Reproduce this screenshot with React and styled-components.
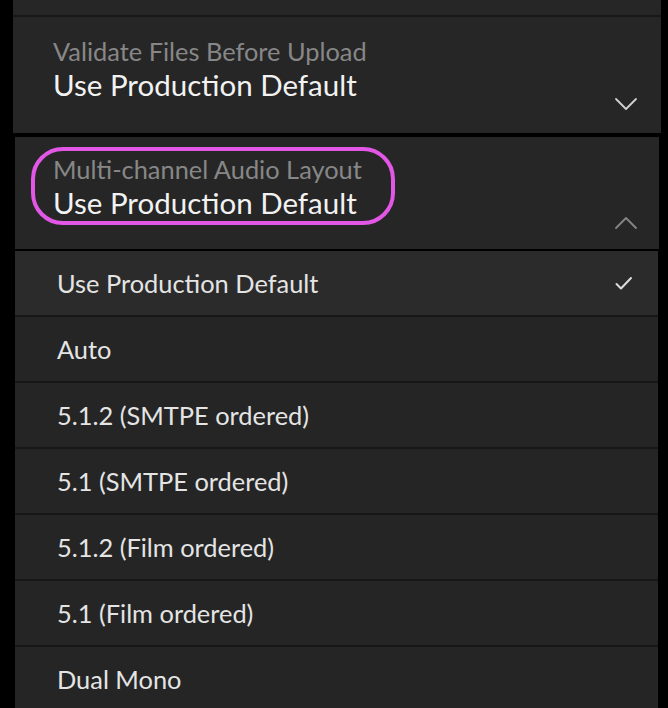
import React from "react";
import styled, { createGlobalStyle } from "styled-components";

const GlobalStyle = createGlobalStyle`
  html, body {
    margin: 0;
    padding: 0;
    background: #000;
  }
  body {
    font-family: "Lato", "Noto Sans", sans-serif;
    -webkit-font-smoothing: antialiased;
  }
`;

const Screen = styled.div`
  width: 668px;
  height: 708px;
  overflow: hidden;
  background: #000;
  display: flex;
  flex-direction: column;
`;

const TopStub = styled.div`
  height: 15px;
  margin: 0 7px 0 13px;
  background: #262626;
  border-bottom: 2px solid #181818;
  flex-shrink: 0;
`;

const Field = styled.div`
  flex-shrink: 0;
  height: ${(p) => p.$height}px;
  margin: ${(p) => p.$margin};
  padding: ${(p) => p.$padding};
  box-sizing: border-box;
  background: #262626;
  display: flex;
  align-items: flex-end;
  justify-content: space-between;
`;

const FieldText = styled.div`
  display: flex;
  flex-direction: column;
  align-self: flex-start;
`;

const Label = styled.div`
  font-size: 25.4px;
  line-height: 30px;
  color: #878787;
  white-space: nowrap;
`;

const Value = styled.div`
  margin-top: 2px;
  font-size: 29.5px;
  line-height: 34px;
  color: #f2f2f2;
  white-space: nowrap;
`;

const Highlight = styled.div`
  margin: -7px 0 0 -22px;
  padding: 3px 29px 1px 18px;
  border: 4px solid #e257e6;
  border-radius: 32px;
`;

const Chevron = styled.svg`
  width: 24px;
  height: 14px;
  margin-bottom: ${(p) => p.$bottom}px;
  flex-shrink: 0;
`;

const Options = styled.div`
  margin: 2px 10px 0 15px;
  display: flex;
  flex-direction: column;
  background: #171717;
`;

const Option = styled.div`
  height: 64px;
  flex-shrink: 0;
  margin-bottom: 2px;
  padding: 0 25px 0 42px;
  background: ${(p) => (p.$selected ? "#2b2b2b" : "#252525")};
  display: flex;
  align-items: center;
  justify-content: space-between;
  font-size: 25.4px;
  color: #e4e4e4;
  white-space: nowrap;
`;

const CheckIcon = () => (
  <svg width="18" height="15" viewBox="0 0 18 15">
    <path
      d="M1.5 8 L6 12.5 L16 2"
      fill="none"
      stroke="#dcdcdc"
      strokeWidth="2"
      strokeLinecap="round"
      strokeLinejoin="round"
    />
  </svg>
);

const options = [
  "Use Production Default",
  "Auto",
  "5.1.2 (SMTPE ordered)",
  "5.1 (SMTPE ordered)",
  "5.1.2 (Film ordered)",
  "5.1 (Film ordered)",
  "Dual Mono",
];

export default function App() {
  return (
    <>
      <GlobalStyle />
      <Screen>
        <TopStub />
        <Field $height={116} $margin="0 7px 0 13px" $padding="19px 23px 0 40px">
          <FieldText>
            <Label>Validate Files Before Upload</Label>
            <Value>Use Production Default</Value>
          </FieldText>
          <Chevron viewBox="0 0 24 14" $bottom={22}>
            <path d="M2 2 L12 12 L22 2" fill="none" stroke="#d0d0d0" strokeWidth="1.8" strokeLinecap="round" strokeLinejoin="round" />
          </Chevron>
        </Field>
        <Field $height={112} $margin="4px 9px 0 15px" $padding="17px 21px 0 38px">
          <FieldText>
            <Highlight>
              <Label>Multi-channel Audio Layout</Label>
              <Value>Use Production Default</Value>
            </Highlight>
          </FieldText>
          <Chevron viewBox="0 0 24 14" $bottom={19}>
            <path d="M2 12 L12 2 L22 12" fill="none" stroke="#858585" strokeWidth="1.8" strokeLinecap="round" strokeLinejoin="round" />
          </Chevron>
        </Field>
        <Options>
          {options.map((o, i) => (
            <Option key={o} $selected={i === 0}>
              {o}
              {i === 0 && <CheckIcon />}
            </Option>
          ))}
        </Options>
      </Screen>
    </>
  );
}
